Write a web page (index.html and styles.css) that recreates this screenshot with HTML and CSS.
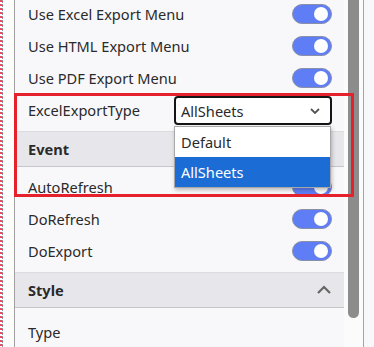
FILE: index.html
```html
<!DOCTYPE html>
<html lang="en">
<head>
    <meta charset="UTF-8">
    <meta name="viewport" content="width=device-width, initial-scale=1.0">
    <title>Property Grid</title>
    <link rel="stylesheet" href="styles.css">
</head>
<body>

<div class="edge"></div>
<div class="gutter"></div>

<div class="panel">
    <div class="list">
        <div class="row">
            <span>Use Excel Export Menu</span>
            <span class="toggle"></span>
        </div>
        <div class="row">
            <span>Use HTML Export Menu</span>
            <span class="toggle"></span>
        </div>
        <div class="row">
            <span>Use PDF Export Menu</span>
            <span class="toggle"></span>
        </div>
        <div class="row select-row">
            <span class="label">ExcelExportType</span>
            <div class="select-wrap">
                <div class="select">
                    <span>AllSheets</span>
                    <svg width="10" height="6" viewBox="0 0 10 6"><path d="M1 1 L5 5 L9 1" fill="none" stroke="#555" stroke-width="1.8"/></svg>
                </div>
                <ul class="options">
                    <li>Default</li>
                    <li class="selected">AllSheets</li>
                </ul>
            </div>
        </div>

        <div class="group-head">Event</div>
        <div class="group">
            <div class="row">
                <span>AutoRefresh</span>
                <span class="toggle"></span>
            </div>
            <div class="row">
                <span>DoRefresh</span>
                <span class="toggle"></span>
            </div>
            <div class="row">
                <span>DoExport</span>
                <span class="toggle"></span>
            </div>
        </div>

        <div class="group-head">
            <span>Style</span>
            <svg width="16" height="10" viewBox="0 0 16 10"><path d="M2 8 L8 2 L14 8" fill="none" stroke="#666" stroke-width="2.2"/></svg>
        </div>
        <div class="group">
            <div class="row select-row type-row">
                <span class="label">Type</span>
            </div>
        </div>
    </div>
</div>

<div class="track">
    <div class="thumb"></div>
</div>
<div class="divider"></div>
<div class="rest"></div>

<!-- cadre rouge de mise en evidence -->
<div class="highlight"></div>

</body>
</html>
```

FILE: styles.css
```css
body {
    margin: 0;
    height: 347px;
    overflow: hidden;
    display: flex;
    position: relative;
    background-color: #f8f8fa;
    font-family: "Noto Sans", sans-serif;
    font-size: 14.6px;
    color: #2a2a2a;
}

.edge {
    width: 3px;
    background: repeating-linear-gradient(to bottom, #e2505e 0 2px, #ffffff 2px 4px);
    border-right: 1px dotted #8a9ab8;
    box-sizing: border-box;
}

.gutter {
    width: 11px;
    background-color: #fcfcfd;
}

.panel {
    width: 330px;
    border-left: 1px solid #a0a0a0;
    box-sizing: border-box;
    background-color: #f8f8fa;
}

.list {
    margin-top: -2px;
}

.row {
    height: 32px;
    display: flex;
    align-items: center;
    justify-content: space-between;
    padding: 0 12px 0 13px;
}

.select-row {
    height: 37px;
    align-items: flex-start;
    padding-top: 2px;
    box-sizing: border-box;
}

.select-row .label {
    line-height: 29px;
}

.type-row {
    padding-top: 6px;
}

/* interrupteurs */
.toggle {
    width: 40px;
    height: 20px;
    box-sizing: border-box;
    border-radius: 10px;
    background-color: #5f7ef6;
    border: 1px solid #8a8fa8;
    position: relative;
}

.toggle::after {
    content: "";
    position: absolute;
    right: 3px;
    top: 2px;
    width: 14px;
    height: 14px;
    border-radius: 50%;
    background-color: #ffffff;
}

/* liste deroulante */
.select-wrap {
    position: relative;
}

.select {
    width: 158px;
    height: 29px;
    box-sizing: border-box;
    border: 2px solid #151515;
    border-radius: 4px;
    background-color: #ffffff;
    display: flex;
    align-items: center;
    justify-content: space-between;
    padding: 0 10px 0 5px;
}

.options {
    position: absolute;
    top: 30px;
    left: 0;
    width: 157px;
    margin: 0;
    padding: 0;
    list-style: none;
    background-color: #ffffff;
    border: 1px solid #a8a8a8;
    box-sizing: border-box;
    box-shadow: 1px 2px 4px rgba(0, 0, 0, 0.25);
    z-index: 5;
}

.options li {
    height: 30px;
    line-height: 30px;
    padding-left: 6px;
}

.options li.selected {
    background-color: #1b6cd5;
    color: #ffffff;
}

/* en-tetes de groupe */
.group-head {
    height: 34px;
    border-top: 1px solid #dcdce0;
    border-bottom: 1px solid #c6c6ca;
    background-color: #e7e7eb;
    font-weight: bold;
    display: flex;
    align-items: center;
    justify-content: space-between;
    padding: 0 12px 0 13px;
}

.group {
    padding: 4px 0 5px;
}

/* barre de defilement */
.track {
    width: 19px;
    background-color: #fbfbfc;
}

.thumb {
    width: 11px;
    height: 318px;
    margin-left: 4px;
    background-color: #8c8c8c;
    border-radius: 0 0 6px 6px;
}

.divider {
    width: 1px;
    background-color: #a4a4a4;
}

.rest {
    flex: 1;
    background-color: #f8f8fa;
}

.highlight {
    position: absolute;
    left: 14px;
    top: 93px;
    width: 340px;
    height: 104px;
    box-sizing: border-box;
    border: 3px solid #e5212b;
    z-index: 10;
}
```
